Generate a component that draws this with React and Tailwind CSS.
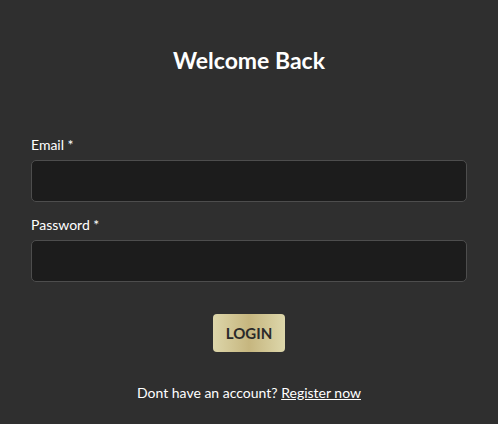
import React from 'react';

const Field = ({ label, type }) => (
  <div className="flex flex-col">
    <label className="text-[14px] leading-[18px] text-white mb-[6px]">{label} *</label>
    <input type={type} className="h-[42px] w-full rounded-[5px] border border-[#4d4d4d] bg-[#1c1c1c] px-3 text-white outline-none" />
  </div>
);

export default function App() {
  return (
    <div
      className="min-h-[424px] w-full bg-[#2f2f2f] px-[31px] pt-[44px] text-white"
      style={{ fontFamily: 'Lato, "Open Sans", sans-serif' }}
    >
      <h1 className="text-center text-[23px] font-bold leading-[32px]">Welcome Back</h1>
      <form className="mt-[60px] flex flex-col gap-[14px]">
        <Field label="Email" type="email" />
        <Field label="Password" type="password" />
      </form>
      <div className="mt-[32px] flex justify-center">
        <button className="h-[38px] w-[72px] rounded-[4px] bg-[linear-gradient(90deg,#ddd6aa_0%,#c6b67f_50%,#ddd7ab_100%)] text-[15px] font-bold text-[#2a2a2a]">
          LOGIN
        </button>
      </div>
      <p className="mt-[32px] text-center text-[14px] leading-[18px]">
        Dont have an account? <a className="underline">Register now</a>
      </p>
    </div>
  );
}
